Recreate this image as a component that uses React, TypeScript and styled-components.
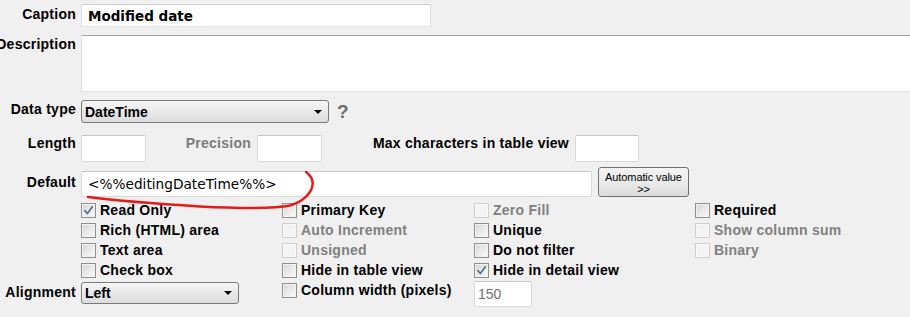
import styled, { createGlobalStyle } from 'styled-components';

type CheckDef = {
  label: string;
  checked?: boolean;
  disabled?: boolean;
};

const checkRows: (CheckDef | null)[][] = [
  [
    { label: 'Read Only', checked: true },
    { label: 'Primary Key' },
    { label: 'Zero Fill', disabled: true },
    { label: 'Required' },
  ],
  [
    { label: 'Rich (HTML) area' },
    { label: 'Auto Increment', disabled: true },
    { label: 'Unique' },
    { label: 'Show column sum', disabled: true },
  ],
  [
    { label: 'Text area' },
    { label: 'Unsigned', disabled: true },
    { label: 'Do not filter' },
    { label: 'Binary', disabled: true },
  ],
  [
    { label: 'Check box' },
    { label: 'Hide in table view' },
    { label: 'Hide in detail view', checked: true },
    null,
  ],
];

function Checkbox({ label, checked, disabled }: CheckDef) {
  return (
    <CheckItem $disabled={disabled}>
      <Box $disabled={disabled}>
        {checked && (
          <svg width="11" height="11" viewBox="0 0 11 11">
            <path
              d="M1.8 5.6 L4.3 8.6 L9.4 1.8"
              fill="none"
              stroke="#56688f"
              strokeWidth="1.6"
              strokeLinecap="round"
              strokeLinejoin="round"
            />
          </svg>
        )}
      </Box>
      {label}
    </CheckItem>
  );
}

function App() {
  return (
    <Page>
      <GlobalStyle />

      <Row>
        <Label $pt={2}>Caption</Label>
        <CaptionField $w={350} $h={23} defaultValue="Modified date" />
      </Row>

      <Row $mt={8}>
        <Label $pt={1}>Description</Label>
        <DescriptionArea />
      </Row>

      <Row $mt={8}>
        <Label $pt={1}>Data type</Label>
        <SelectBox $w={248} $h={23}>
          <SelectValue>DateTime</SelectValue>
          <Arrow />
        </SelectBox>
        <HelpMark>?</HelpMark>
      </Row>

      <Row $mt={12}>
        <Label>Length</Label>
        <Field $w={65} $h={27} />
        <SideLabel $w={105} $muted>
          Precision
        </SideLabel>
        <Field $w={65} $h={27} />
        <SideLabel $w={247}>Max characters in table view</SideLabel>
        <Field $w={64} $h={27} />
      </Row>

      <Row $mt={5}>
        <Label $pt={7}>Default</Label>
        <DefaultField $w={511} $h={26} defaultValue="<%%editingDateTime%%>" />
        <AutoButton>
          <span>Automatic value</span>
          <span>&gt;&gt;</span>
        </AutoButton>
      </Row>

      <CheckGrid>
        {checkRows.map((row, i) => [
          <span key={`l${i}`} />,
          ...row.map((c, j) =>
            c ? <Checkbox key={`${i}-${j}`} {...c} /> : <span key={`${i}-${j}`} />
          ),
        ])}
        <Label $pt={4}>Alignment</Label>
        <SelectBox $w={158} $h={22} $mt={2}>
          <SelectValue>Left</SelectValue>
          <Arrow />
        </SelectBox>
        <Checkbox label="Column width (pixels)" />
        <NumberField $w={58} $h={26} $mt={1} defaultValue="150" disabled />
      </CheckGrid>

      <Scribble width="910" height="317" viewBox="0 0 910 317">
        <path
          d="M88 197 C120 201 160 204 200 206.5 C240 208.5 275 208.5 290 205.5 C303 202 311.5 193 312.5 185 C313.5 179 310 175 306 172"
          fill="none"
          stroke="#e21b1b"
          strokeWidth="2.4"
          strokeLinecap="round"
        />
      </Scribble>
    </Page>
  );
}

const GlobalStyle = createGlobalStyle`
  html, body {
    margin: 0;
    padding: 0;
  }

  body {
    background: #f0f0f0;
    font-family: "Liberation Sans", Arial, sans-serif;
    color: #000;
    overflow: hidden;
  }
`;

const Page = styled.div`
  position: relative;
  width: 910px;
  height: 317px;
  padding-top: 4px;
  box-sizing: border-box;
`;

const Row = styled.div<{ $mt?: number }>`
  display: flex;
  align-items: flex-start;
  margin-top: ${({ $mt }) => $mt ?? 0}px;
`;

const Label = styled.label<{ $pt?: number }>`
  flex: none;
  width: 76px;
  margin-right: 5px;
  padding-top: ${({ $pt }) => $pt ?? 0}px;
  display: flex;
  justify-content: flex-end;
  white-space: nowrap;
  font-size: 14px;
  line-height: 16px;
  font-weight: bold;
  letter-spacing: 0.25px;
`;

const SideLabel = styled.label<{ $w: number; $muted?: boolean }>`
  flex: none;
  width: ${({ $w }) => $w}px;
  margin-right: 6px;
  text-align: right;
  white-space: nowrap;
  font-size: 14px;
  line-height: 16px;
  font-weight: bold;
  letter-spacing: 0.25px;
  color: ${({ $muted }) => ($muted ? '#7b7b7b' : '#000')};
`;

const Field = styled.input<{ $w: number; $h: number; $mt?: number }>`
  flex: none;
  box-sizing: border-box;
  width: ${({ $w }) => $w}px;
  height: ${({ $h }) => $h}px;
  margin: ${({ $mt }) => $mt ?? 0}px 0 0 0;
  padding: 0 6px;
  border: 1px solid #d9d9d9;
  border-top-color: #c6c6c6;
  border-radius: 2px;
  background: #fff;
  outline: none;
  font-family: "DejaVu Sans", Verdana, sans-serif;
  font-size: 13.7px;
  color: #000;
`;

const CaptionField = styled(Field)`
  border-color: #e2e2e2;
  border-top-color: #cfcfcf;
  border-radius: 0;
  font-weight: bold;
  font-size: 13.5px;
`;

const DefaultField = styled(Field)`
  margin-top: 4px;
`;

const NumberField = styled(Field)`
  padding: 0 3px;
  background: #fff;
  font-family: "Liberation Sans", Arial, sans-serif;
  font-size: 14px;
  color: #707070;
  align-self: start;
`;

const DescriptionArea = styled.textarea`
  flex: none;
  box-sizing: border-box;
  width: 840px;
  height: 57px;
  margin: 0;
  padding: 4px 6px;
  border: 1px solid #e0e0e0;
  border-top-color: #a3a3a3;
  border-right: none;
  background: #fff;
  resize: none;
  outline: none;
`;

const SelectBox = styled.div<{ $w: number; $h: number; $mt?: number }>`
  flex: none;
  box-sizing: border-box;
  width: ${({ $w }) => $w}px;
  height: ${({ $h }) => $h}px;
  margin-top: ${({ $mt }) => $mt ?? 0}px;
  align-self: start;
  display: flex;
  align-items: center;
  justify-content: space-between;
  padding: 0 6px 0 3px;
  border: 1px solid #7a7a7a;
  border-radius: 3px;
  background: linear-gradient(#f6f6f6, #e9e9e9 50%, #dcdcdc);
`;

const SelectValue = styled.span`
  font-size: 14px;
  font-weight: bold;
  white-space: nowrap;
`;

const Arrow = styled.span`
  width: 0;
  height: 0;
  border-left: 4px solid transparent;
  border-right: 4px solid transparent;
  border-top: 4px solid #000;
`;

const HelpMark = styled.span`
  margin-left: 8px;
  font-size: 19px;
  line-height: 23px;
  font-weight: bold;
  color: #6e6e6e;
`;

const AutoButton = styled.button`
  flex: none;
  box-sizing: border-box;
  width: 91px;
  height: 30px;
  margin: 0 0 0 6px;
  padding: 3px 0 0;
  display: flex;
  flex-direction: column;
  align-items: center;
  justify-content: flex-start;
  border: 1px solid #707070;
  border-radius: 3px;
  background: linear-gradient(#f3f3f3, #ebebeb 50%, #dcdcdc);
  font-family: "Liberation Sans", Arial, sans-serif;
  font-size: 11px;
  line-height: 12px;
  letter-spacing: -0.1px;
  color: #000;
`;

const CheckGrid = styled.div`
  display: grid;
  grid-template-columns: 81px 201px 192px 221px 1fr;
  grid-template-rows: repeat(4, 20px) auto;
  align-items: start;
  margin-top: 3px;
`;

const CheckItem = styled.label<{ $disabled?: boolean }>`
  height: 20px;
  display: flex;
  align-items: center;
  gap: 4px;
  white-space: nowrap;
  font-size: 14px;
  line-height: 16px;
  font-weight: bold;
  letter-spacing: 0.25px;
  color: ${({ $disabled }) => ($disabled ? '#808080' : '#000')};
`;

const Box = styled.span<{ $disabled?: boolean }>`
  flex: none;
  box-sizing: border-box;
  width: 15px;
  height: 15px;
  display: flex;
  align-items: center;
  justify-content: center;
  border: 1px solid ${({ $disabled }) => ($disabled ? '#cfcfcf' : '#8e8f8f')};
  background: ${({ $disabled }) =>
    $disabled
      ? '#f4f4f4'
      : 'linear-gradient(135deg, #d4d4d4 0%, #ebebeb 55%, #fafafa 100%)'};
  box-shadow: inset 0 0 0 1px ${({ $disabled }) => ($disabled ? '#f7f7f7' : '#f3f3f3')};
`;

const Scribble = styled.svg`
  position: absolute;
  left: 0;
  top: 0;
  pointer-events: none;
`;

export default App;
